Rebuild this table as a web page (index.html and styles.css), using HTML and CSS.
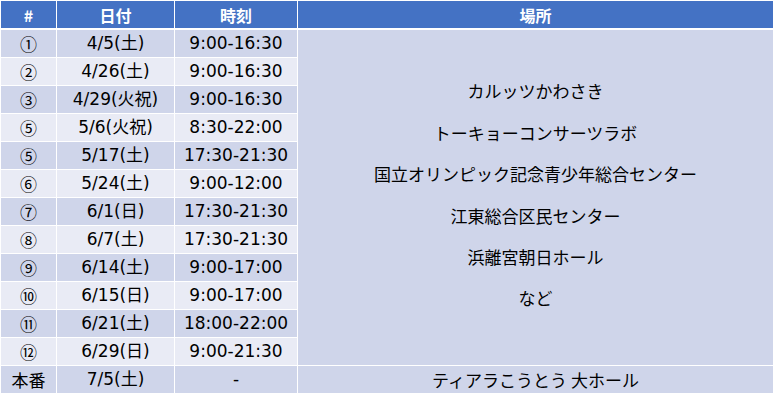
FILE: index.html
```html
<!DOCTYPE html>
<html lang="ja">
<head>
<meta charset="utf-8">
<title>練習日程</title>
<link rel="stylesheet" href="styles.css">
</head>
<body>
<table class="schedule">
  <colgroup>
    <col class="c-no">
    <col class="c-date">
    <col class="c-time">
    <col class="c-place">
  </colgroup>
  <thead>
    <tr><th>#</th><th>日付</th><th>時刻</th><th>場所</th></tr>
  </thead>
  <tbody>
    <tr class="odd"><td class="no">①</td><td>4/5(土)</td><td>9:00-16:30</td>
      <td class="places" rowspan="12">
        <div class="place-list">
          <div>カルッツかわさき</div>
          <div>トーキョーコンサーツラボ</div>
          <div>国立オリンピック記念青少年総合センター</div>
          <div>江東総合区民センター</div>
          <div>浜離宮朝日ホール</div>
          <div>など</div>
        </div>
      </td>
    </tr>
    <tr class="even"><td class="no">②</td><td>4/26(土)</td><td>9:00-16:30</td></tr>
    <tr class="odd"><td class="no">③</td><td>4/29(火祝)</td><td>9:00-16:30</td></tr>
    <tr class="even"><td class="no">⑤</td><td>5/6(火祝)</td><td>8:30-22:00</td></tr>
    <tr class="odd"><td class="no">⑤</td><td>5/17(土)</td><td>17:30-21:30</td></tr>
    <tr class="even"><td class="no">⑥</td><td>5/24(土)</td><td>9:00-12:00</td></tr>
    <tr class="odd"><td class="no">⑦</td><td>6/1(日)</td><td>17:30-21:30</td></tr>
    <tr class="even"><td class="no">⑧</td><td>6/7(土)</td><td>17:30-21:30</td></tr>
    <tr class="odd"><td class="no">⑨</td><td>6/14(土)</td><td>9:00-17:00</td></tr>
    <tr class="even"><td class="no">⑩</td><td>6/15(日)</td><td>9:00-17:00</td></tr>
    <tr class="odd"><td class="no">⑪</td><td>6/21(土)</td><td>18:00-22:00</td></tr>
    <tr class="even"><td class="no">⑫</td><td>6/29(日)</td><td>9:00-21:30</td></tr>
    <tr class="odd final"><td class="no">本番</td><td>7/5(土)</td><td>-</td><td class="place-final">ティアラこうとう 大ホール</td></tr>
  </tbody>
</table>
</body>
</html>
```

FILE: styles.css
```css
html, body {
  margin: 0;
  padding: 0;
  background: #ffffff;
}

.schedule {
  table-layout: fixed;
  width: 774px;
  border-collapse: separate;
  border-spacing: 1px;
  background: #ffffff;
  font-family: "DejaVu Sans", "Noto Sans CJK JP", sans-serif;
  font-size: 17px;
  color: #000000;
}

.c-no { width: 55px; }
.c-date { width: 117px; }
.c-time { width: 122px; }
.c-place { width: 475px; }

.schedule th,
.schedule td {
  padding: 0;
  text-align: center;
  vertical-align: middle;
}

.schedule th {
  height: 27px;
  background: #4472c4;
  color: #ffffff;
  font-family: "Noto Sans CJK JP", sans-serif;
  font-weight: bold;
  font-size: 16px;
  border-bottom: 1px solid #ffffff;
}

.schedule td {
  height: 27px;
  line-height: 27px;
  white-space: nowrap;
}

.odd td { background: #cfd5ea; }
.even td { background: #e9ebf5; }

.schedule td.no {
  font-family: "Noto Sans CJK JP", sans-serif;
  font-size: 17px;
}

.schedule td.places {
  background: #cfd5ea;
  font-family: "Noto Sans CJK JP", sans-serif;
  font-size: 17px;
}

.place-list {
  line-height: 41.4px;
  padding-bottom: 6px;
}

.schedule td.place-final {
  font-family: "Noto Sans CJK JP", sans-serif;
  font-size: 17px;
}
```
